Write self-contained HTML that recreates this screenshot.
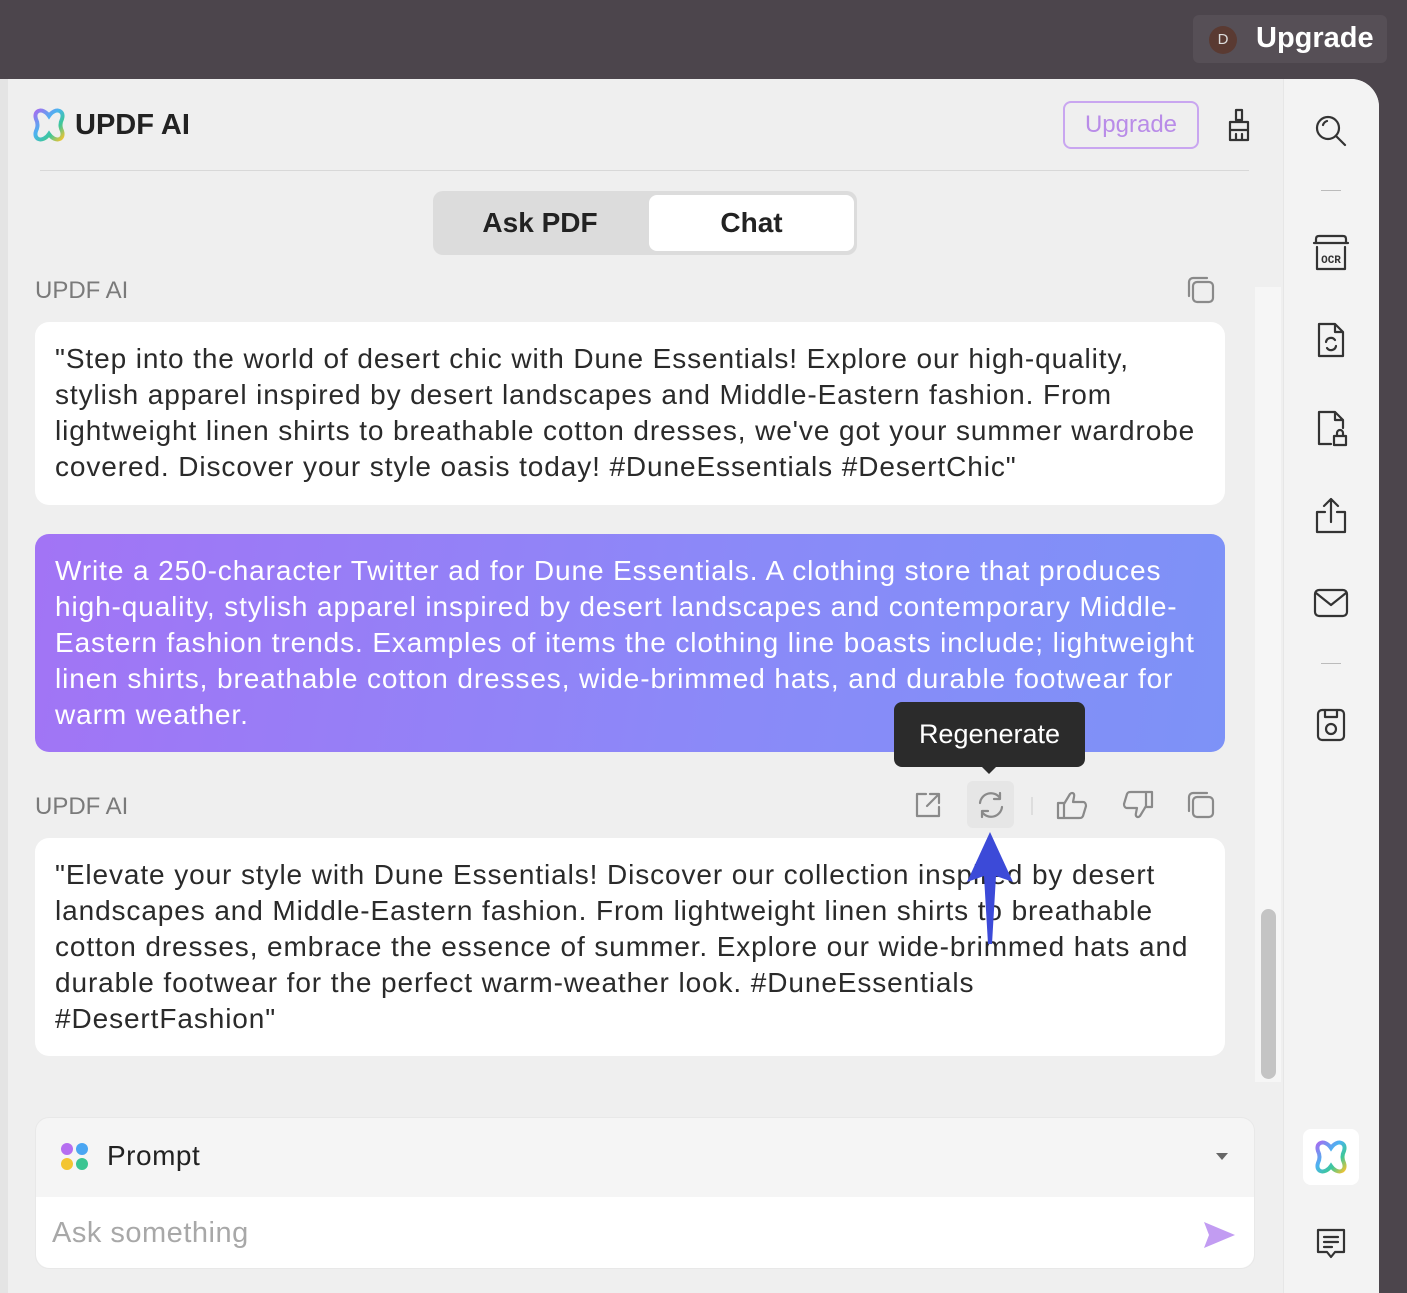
<!DOCTYPE html>
<html><head><style>
*{margin:0;padding:0;box-sizing:border-box}
body{width:1407px;height:1293px;background:#4c454c;font-family:"Liberation Sans",sans-serif;position:relative;overflow:hidden}
.abs{position:absolute}
.panel{left:8px;top:79px;width:1371px;height:1214px;background:#efefef;border-top-right-radius:28px}
.side{left:1283px;top:79px;width:96px;height:1214px;background:#f3f3f3;border-left:1px solid #e6e6e6;border-top-right-radius:28px}
.bubble{background:#fff;border-radius:14px;font-size:28px;line-height:36px;color:#2a2a2a;padding:20px 20px;white-space:nowrap;letter-spacing:0.9px}
.lbl{font-size:24px;color:#7a7a7a}
svg.ic{position:absolute;fill:none;stroke:#333;stroke-width:2.2;stroke-linecap:round;stroke-linejoin:round}
svg.g{stroke:#8a8a8a}
</style></head><body>
<div class="abs" style="left:1193px;top:15px;width:194px;height:48px;background:#564f56;border-radius:6px"></div>
<div class="abs" style="left:1209px;top:26px;width:28px;height:28px;border-radius:50%;background:#5a3a32;color:#ddd;font-size:15px;text-align:center;line-height:28px">D</div>
<div class="abs" style="left:1256px;top:22px;color:#fff;font-size:29px;font-weight:bold">Upgrade</div>
<div class="abs panel"></div>
<div class="abs" style="left:0;top:79px;width:8px;height:1214px;background:#e4e4e4"></div>
<div class="abs side"></div>
<!-- header -->
<svg class="abs" style="left:31px;top:107px" width="36" height="36" viewBox="0 0 36 36"><path d="M18 9 C12 0 2 3 5 12 C7 16 7 20 5 24 C2 33 12 36 18 27 C24 36 34 33 31 24 C29 20 29 16 31 12 C34 3 24 0 18 9Z" fill="none" stroke="url(#lg)" stroke-width="4"/><defs><linearGradient id="lg" x1="0" y1="0" x2="1" y2="1"><stop offset="0" stop-color="#a36ef0"/><stop offset=".4" stop-color="#4cb3f0"/><stop offset=".7" stop-color="#3cc79a"/><stop offset="1" stop-color="#f2c431"/></linearGradient></defs></svg>
<div class="abs" style="left:75px;top:109px;font-size:29px;font-weight:bold;color:#222">UPDF AI</div>
<div class="abs" style="left:1063px;top:101px;width:136px;height:48px;border:2px solid #c9a6f0;border-radius:8px;color:#b98ce8;font-size:24px;text-align:center;line-height:44px">Upgrade</div>
<svg class="ic" style="left:1226px;top:108px" width="26" height="36" viewBox="0 0 26 36"><path d="M10 2h6v10h-6z M4 14h18v18H4z M4 22h18 M10 26v6 M16 26v6"/></svg>
<div class="abs" style="left:40px;top:170px;width:1209px;height:1px;background:#d8d8d8"></div>
<!-- tabs -->
<div class="abs" style="left:433px;top:191px;width:424px;height:64px;background:#dcdcdc;border-radius:10px"></div>
<div class="abs" style="left:649px;top:195px;width:205px;height:56px;background:#fff;border-radius:8px"></div>
<div class="abs" style="left:433px;top:207px;width:214px;text-align:center;font-size:28px;color:#222;font-weight:bold">Ask PDF</div>
<div class="abs" style="left:649px;top:207px;width:205px;text-align:center;font-size:28px;color:#222;font-weight:bold">Chat</div>
<!-- msg1 -->
<div class="abs lbl" style="left:35px;top:277px">UPDF AI</div>
<svg class="ic g" style="left:1186px;top:275px" width="30" height="30" viewBox="0 0 30 30"><rect x="7" y="7" width="20" height="20" rx="4"/><path d="M3 21V7a4 4 0 0 1 4-4h14"/></svg>
<div class="abs bubble" style="left:35px;top:322px;width:1190px;height:183px;padding-top:19px">"Step into the world of desert chic with Dune Essentials! Explore our high-quality,<br>stylish apparel inspired by desert landscapes and Middle-Eastern fashion. From<br>lightweight linen shirts to breathable cotton dresses, we've got your summer wardrobe<br>covered. Discover your style oasis today! #DuneEssentials #DesertChic"</div>
<!-- user -->
<div class="abs bubble" style="left:35px;top:534px;width:1190px;height:218px;color:#fff;background:linear-gradient(100deg,#a274f5,#8a8af8 60%,#7d92f7);padding-top:19px">Write a 250-character Twitter ad for Dune Essentials. A clothing store that produces<br>high-quality, stylish apparel inspired by desert landscapes and contemporary Middle-<br>Eastern fashion trends. Examples of items the clothing line boasts include; lightweight<br>linen shirts, breathable cotton dresses, wide-brimmed hats, and durable footwear for<br>warm weather.</div>
<!-- msg2 -->
<div class="abs lbl" style="left:35px;top:793px">UPDF AI</div>
<svg class="ic g" style="left:912px;top:789px" width="32" height="32" viewBox="0 0 32 32"><path d="M14 5H5v22h22v-9 M18 5h9v9 M27 5L15 17"/></svg>
<div class="abs" style="left:967px;top:781px;width:47px;height:47px;background:#e6e6e6;border-radius:6px"></div>
<svg class="ic g" style="left:975px;top:789px" width="32" height="32" viewBox="0 0 32 32"><path d="M5 14a11 11 0 0 1 20-5 M25 4v6h-6 M27 18a11 11 0 0 1-20 5 M7 28v-6h6"/></svg>
<div class="abs" style="left:1031px;top:797px;width:2px;height:18px;background:#ddd"></div>
<svg class="ic g" style="left:1055px;top:789px" width="34" height="32" viewBox="0 0 34 32"><path d="M3 14h6v15H3z M9 15l6-10c2-2 5-1 4 3l-1 5h10c2 0 3 2 3 4l-3 10c-1 2-2 2-4 2H9"/></svg>
<svg class="ic g" style="left:1121px;top:789px" width="34" height="32" viewBox="0 0 34 32"><path d="M31 18h-6V3h6z M25 17l-6 10c-2 2-5 1-4-3l1-5H6c-2 0-3-2-3-4L6 5c1-2 2-2 4-2h15"/></svg>
<svg class="ic g" style="left:1186px;top:790px" width="30" height="30" viewBox="0 0 30 30"><rect x="7" y="7" width="20" height="20" rx="4"/><path d="M3 21V7a4 4 0 0 1 4-4h14"/></svg>
<div class="abs bubble" style="left:35px;top:838px;width:1190px;height:218px;padding-top:19px">"Elevate your style with Dune Essentials! Discover our collection inspired by desert<br>landscapes and Middle-Eastern fashion. From lightweight linen shirts to breathable<br>cotton dresses, embrace the essence of summer. Explore our wide-brimmed hats and<br>durable footwear for the perfect warm-weather look. #DuneEssentials<br>#DesertFashion"</div>
<!-- tooltip -->
<div class="abs" style="left:894px;top:702px;width:191px;height:65px;background:#2b2b2b;border-radius:8px;color:#fff;font-size:27px;text-align:center;line-height:65px">Regenerate</div>
<div class="abs" style="left:981px;top:766px;width:0;height:0;border-left:8px solid transparent;border-right:8px solid transparent;border-top:8px solid #2b2b2b"></div>
<!-- arrow -->
<svg class="abs" style="left:965px;top:832px" width="50" height="115" viewBox="0 0 50 115"><path d="M25 0 L48 50 L31 44 L27 112 L23 112 L19 44 L2 50Z" fill="#3c4ad8"/></svg>
<!-- scrollbars -->
<div class="abs" style="left:1255px;top:287px;width:26px;height:795px;background:#f6f6f6"></div>
<div class="abs" style="left:1261px;top:909px;width:15px;height:170px;background:#c4c4c4;border-radius:8px"></div>
<!-- prompt -->
<div class="abs" style="left:35px;top:1117px;width:1220px;height:152px;background:#f5f5f5;border-radius:14px;border:1px solid #e8e8e8"></div>
<div class="abs" style="left:61px;top:1143px;width:12px;height:12px;border-radius:50%;background:#b56ef0"></div>
<div class="abs" style="left:76px;top:1143px;width:12px;height:12px;border-radius:50%;background:#4aa6f2"></div>
<div class="abs" style="left:61px;top:1158px;width:12px;height:12px;border-radius:50%;background:#f3c531"></div>
<div class="abs" style="left:76px;top:1158px;width:12px;height:12px;border-radius:50%;background:#3bc592"></div>
<div class="abs" style="left:107px;top:1140px;font-size:28px;color:#222;letter-spacing:0.5px">Prompt</div>
<div class="abs" style="left:1216px;top:1153px;border-left:6px solid transparent;border-right:6px solid transparent;border-top:7px solid #666"></div>
<div class="abs" style="left:36px;top:1197px;width:1218px;height:71px;background:#fff;border-radius:0 0 14px 14px"></div>
<div class="abs" style="left:52px;top:1217px;font-size:29px;color:#a8a8a8;letter-spacing:0.5px">Ask something</div>
<svg class="abs" style="left:1202px;top:1220px" width="34" height="30" viewBox="0 0 34 30"><path d="M2 2 L33 15 L2 28 L7 15Z" fill="#c29cf2"/></svg>
<!-- sidebar icons -->
<svg class="ic" style="left:1313px;top:113px" width="36" height="36" viewBox="0 0 36 36"><circle cx="15" cy="15" r="11"/><path d="M23 23l9 9 M10 12a6 6 0 0 1 4-4"/></svg>
<div class="abs" style="left:1321px;top:190px;width:20px;height:1px;background:#bbb"></div>
<svg class="ic" style="left:1312px;top:233px" width="38" height="40" viewBox="0 0 38 40"><path d="M4 10V6c0-2 1-3 3-3h24c2 0 3 1 3 3v4 M2 10h34 M5 14v22h28V14"/><text x="19" y="30" font-size="11" font-family="Liberation Mono" fill="#333" stroke="none" text-anchor="middle" font-weight="bold">OCR</text></svg>
<svg class="ic" style="left:1315px;top:320px" width="32" height="40" viewBox="0 0 32 40"><path d="M4 4h16l8 8v24H4z M20 4v8h8 M11 22a5 5 0 0 1 9-2 M21 26a5 5 0 0 1-9 2"/></svg>
<svg class="ic" style="left:1315px;top:408px" width="34" height="40" viewBox="0 0 34 40"><path d="M16 36H4V4h16l8 8v8 M20 4v8h8 M19 28h12v9H19z M22 28v-3a3 3 0 0 1 6 0v3"/></svg>
<svg class="ic" style="left:1313px;top:496px" width="36" height="40" viewBox="0 0 36 40"><path d="M12 16H4v20h28V16h-8 M18 26V3 M11 10l7-7 7 7"/></svg>
<svg class="ic" style="left:1313px;top:587px" width="36" height="32" viewBox="0 0 36 32"><rect x="2" y="3" width="32" height="26" rx="4"/><path d="M3 6l15 12 15-12"/></svg>
<div class="abs" style="left:1321px;top:663px;width:20px;height:1px;background:#bbb"></div>
<svg class="ic" style="left:1315px;top:707px" width="32" height="36" viewBox="0 0 32 36"><rect x="3" y="3" width="26" height="30" rx="4"/><path d="M10 3v7h12V3"/><circle cx="16" cy="22" r="5"/></svg>
<div class="abs" style="left:1303px;top:1129px;width:56px;height:56px;background:#fff;border-radius:8px"></div>
<svg class="abs" style="left:1313px;top:1139px" width="36" height="36" viewBox="0 0 36 36"><path d="M18 9 C12 0 2 3 5 12 C7 16 7 20 5 24 C2 33 12 36 18 27 C24 36 34 33 31 24 C29 20 29 16 31 12 C34 3 24 0 18 9Z" fill="none" stroke="url(#lg)" stroke-width="4"/></svg>
<svg class="ic" style="left:1315px;top:1227px" width="32" height="36" viewBox="0 0 32 36"><path d="M3 3h26v22H20l-4 5-4-5H3z M9 10h14 M9 15h14 M9 20h8"/></svg>
</body></html>
